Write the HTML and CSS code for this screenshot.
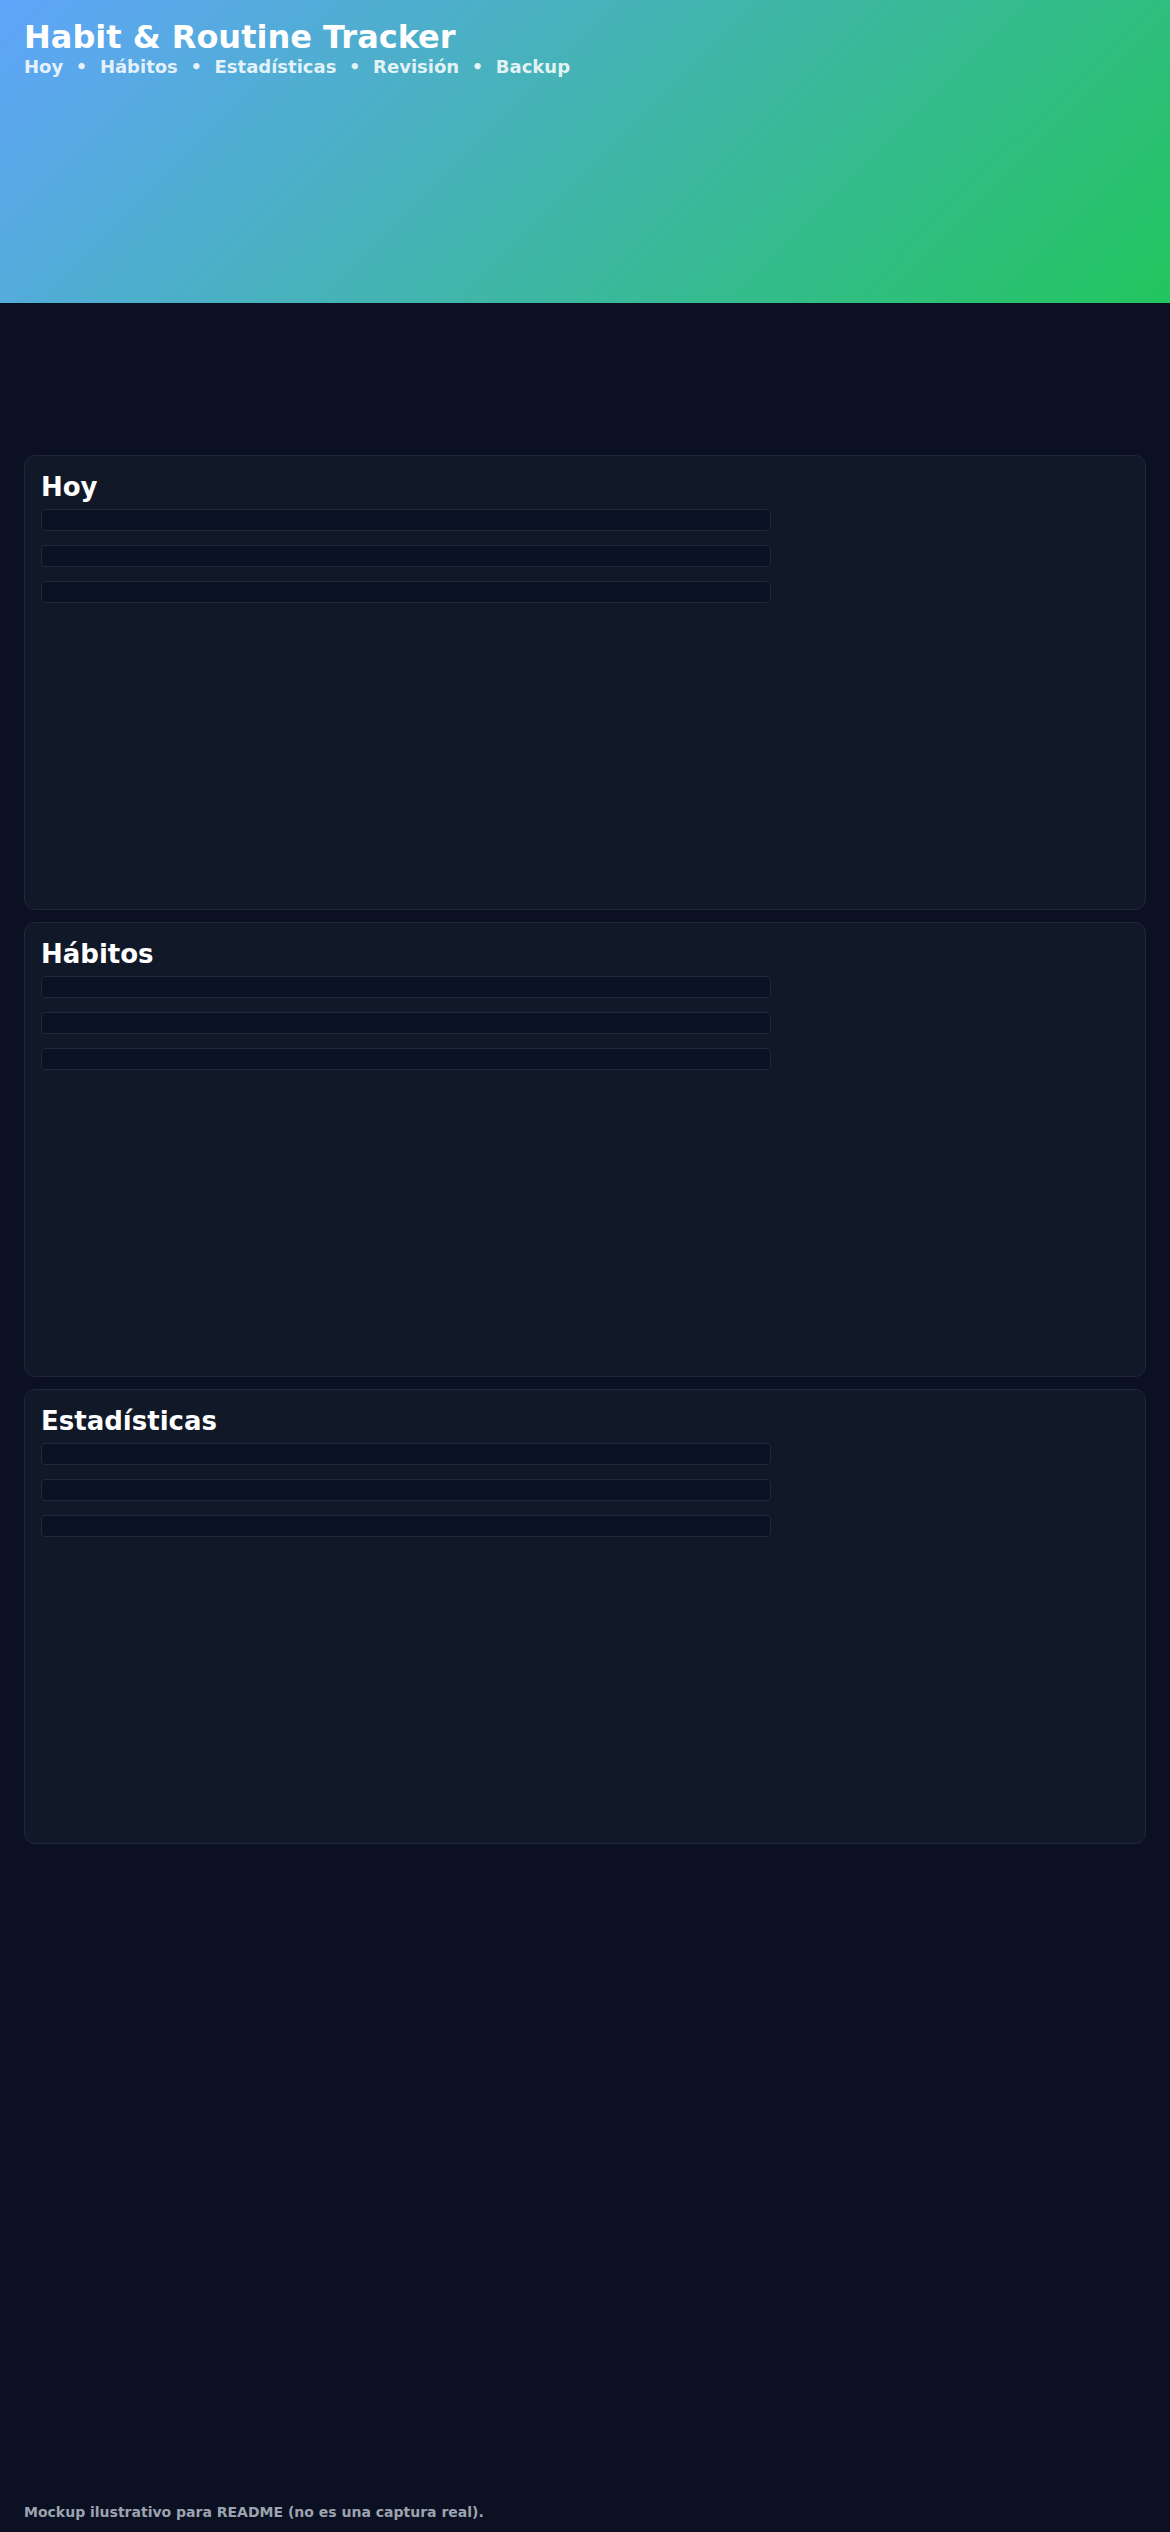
FILE: index.html
```html
<!DOCTYPE html>
<html lang="es">
<head>
    <meta charset="UTF-8">
    <meta name="viewport" content="width=device-width, initial-scale=1.0">
    <title>Habit &amp; Routine Tracker</title>
    <link rel="stylesheet" href="styles.css">
</head>
<body>
    <header class="hero">
        <h1 class="hero-title">Habit &amp; Routine Tracker</h1>
        <nav class="hero-nav">
            <span>Hoy</span><span class="dot">•</span>
            <span>Hábitos</span><span class="dot">•</span>
            <span>Estadísticas</span><span class="dot">•</span>
            <span>Revisión</span><span class="dot">•</span>
            <span>Backup</span>
        </nav>
    </header>

    <main class="panels">
        <section class="panel">
            <h2 class="panel-title">Hoy</h2>
            <div class="row"></div>
            <div class="row"></div>
            <div class="row"></div>
        </section>
        <section class="panel">
            <h2 class="panel-title">Hábitos</h2>
            <div class="row"></div>
            <div class="row"></div>
            <div class="row"></div>
        </section>
        <section class="panel">
            <h2 class="panel-title">Estadísticas</h2>
            <div class="row"></div>
            <div class="row"></div>
            <div class="row"></div>
        </section>
    </main>

    <footer class="note">Mockup ilustrativo para README (no es una captura real).</footer>
</body>
</html>
```

FILE: styles.css
```css
body {
    font-family: "DejaVu Sans", Verdana, sans-serif;
    font-weight: bold;
    margin: 0;
    min-height: 2532px;
    background-color: #0b1022;
    display: flex;
    flex-direction: column;
}
.hero {
    height: 303px;
    box-sizing: border-box;
    padding: 18px 24px 0;
    background: linear-gradient(135deg, #60a5fa, #22c55e);
    color: #ffffff;
}
.hero-title {
    margin: 0;
    font-size: 32px;
    line-height: 1.2;
}
.hero-nav {
    display: flex;
    gap: 12.6px;
    font-size: 18px;
    line-height: 1.2;
    color: rgba(255, 255, 255, 0.86);
}
.panels {
    display: flex;
    flex-direction: column;
    gap: 12px;
    margin: 152px 24px 0;
}
.panel {
    height: 455px;
    box-sizing: border-box;
    padding: 16px 16px;
    background-color: #111827;
    border: 1px solid #1e293b;
    border-radius: 11px;
    display: flex;
    flex-direction: column;
    gap: 14px;
}
.panel-title {
    margin: 0 0 -8px;
    font-size: 26px;
    line-height: 1.2;
    color: #ffffff;
}
.row {
    width: 730px;
    height: 22px;
    box-sizing: border-box;
    background-color: #0b1224;
    border: 1px solid #1e293b;
    border-radius: 4px;
}
.note {
    margin-top: auto;
    padding: 0 24px 11px;
    font-size: 14px;
    line-height: 17px;
    color: #9ca3af;
}
```
